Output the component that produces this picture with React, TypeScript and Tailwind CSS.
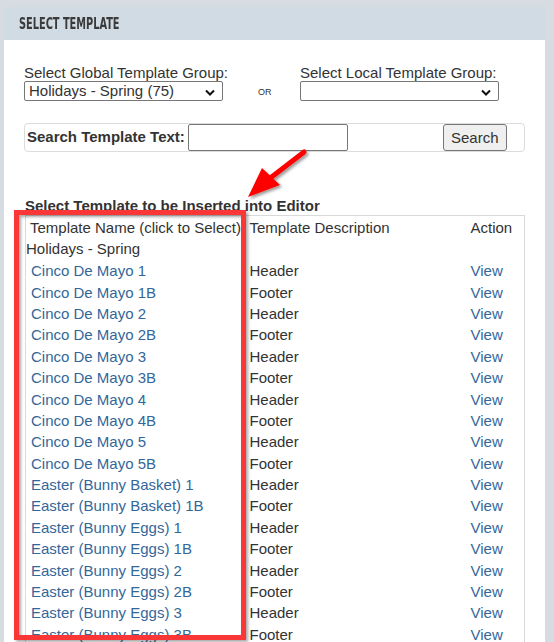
import React from 'react';

const rows: [string, string][] = [
  ['Cinco De Mayo 1', 'Header'],
  ['Cinco De Mayo 1B', 'Footer'],
  ['Cinco De Mayo 2', 'Header'],
  ['Cinco De Mayo 2B', 'Footer'],
  ['Cinco De Mayo 3', 'Header'],
  ['Cinco De Mayo 3B', 'Footer'],
  ['Cinco De Mayo 4', 'Header'],
  ['Cinco De Mayo 4B', 'Footer'],
  ['Cinco De Mayo 5', 'Header'],
  ['Cinco De Mayo 5B', 'Footer'],
  ['Easter (Bunny Basket) 1', 'Header'],
  ['Easter (Bunny Basket) 1B', 'Footer'],
  ['Easter (Bunny Eggs) 1', 'Header'],
  ['Easter (Bunny Eggs) 1B', 'Footer'],
  ['Easter (Bunny Eggs) 2', 'Header'],
  ['Easter (Bunny Eggs) 2B', 'Footer'],
  ['Easter (Bunny Eggs) 3', 'Header'],
  ['Easter (Bunny Eggs) 3B', 'Footer'],
];

function Chevron() {
  return (
    <svg width="10" height="7" viewBox="0 0 10 7" className="absolute right-[7px] top-[7px]">
      <path d="M1 1.5 L5 5.5 L9 1.5" fill="none" stroke="#111" strokeWidth="2" />
    </svg>
  );
}

export default function App() {
  return (
    <div className="h-[642px] overflow-hidden bg-[#d6dce1] pt-[7px] pl-[4px] pr-[9px] font-['Liberation_Sans',Arial,sans-serif] text-[15px] text-[#333]">
      <div className="bg-white min-h-[700px]">
        {/* Header band */}
        <div className="h-[33px] bg-[#d1dbe3] flex items-center pl-[15px]">
          <span className="inline-block origin-left scale-x-[0.68] whitespace-nowrap font-['DejaVu_Sans_Condensed','DejaVu_Sans',sans-serif] font-bold text-[16px] text-[#3a3a3a]">
            SELECT TEMPLATE
          </span>
        </div>

        {/* Group selects */}
        <div className="flex items-end pl-[20px] pt-[24px]">
          <div className="w-[199px]">
            <div className="leading-[17px] whitespace-nowrap">Select Global Template Group:</div>
            <div className="relative h-[20px] border border-[#767676] rounded-[2px] pl-[4px] leading-[18px]">
              Holidays - Spring (75)
              <Chevron />
            </div>
          </div>
          <div className="w-[77px] text-[9px] pl-[35px] pb-[2px]">OR</div>
          <div className="w-[199px]">
            <div className="leading-[17px] whitespace-nowrap">Select Local Template Group:</div>
            <div className="relative h-[20px] border border-[#767676] rounded-[2px]">
              <Chevron />
            </div>
          </div>
        </div>

        {/* Search row */}
        <div className="ml-[20px] mt-[22px] w-[501px] h-[29px] border border-[#dcdcdc] rounded-[4px] flex items-center pl-[2px]">
          <span className="font-bold whitespace-nowrap w-[161px]">Search Template Text:</span>
          <div className="w-[160px] h-[27px] border border-[#767676] rounded-[2px]" />
          <button className="ml-[95px] h-[27px] px-[7px] bg-[#efefef] border border-[#767676] rounded-[3px] text-[15px] leading-[20px]">
            Search
          </button>
        </div>

        {/* Template list */}
        <div className="relative pl-[21px] pt-[45px]">
          <div className="font-bold whitespace-nowrap leading-[17px]">Select Template to be Inserted into Editor</div>
          <table className="border border-[#d9d9d9] border-collapse w-[500px] mt-[1px]">
            <tbody>
              <tr className="h-[22px] leading-[21px]">
                <td className="w-[224px] pl-[4px] pt-[1px] align-top whitespace-nowrap">Template Name (click to Select)</td>
                <td className="align-top pt-[1px] whitespace-nowrap">Template Description</td>
                <td className="w-[54px] align-top pt-[1px]">Action</td>
              </tr>
              <tr className="h-[22px] leading-[22px]">
                <td colSpan={3}>Holidays - Spring</td>
              </tr>
              {rows.map(([name, desc]) => (
                <tr key={name} className="h-[21.4px] leading-[21px]">
                  <td className="pl-[5px] text-[#33679a] whitespace-nowrap">{name}</td>
                  <td>{desc}</td>
                  <td className="text-[#33679a]">View</td>
                </tr>
              ))}
            </tbody>
          </table>

          {/* Annotation: red box */}
          <div className="absolute left-[10px] top-[58px] w-[232px] h-[430px] border-[5px] border-[#fb3637] shadow-[2px_2px_3px_rgba(0,0,0,0.35),inset_2px_2px_3px_rgba(0,0,0,0.35)]" />

          {/* Annotation: arrow */}
          <svg className="absolute left-[230px] top-[-10px] overflow-visible" width="90" height="70" viewBox="0 0 90 70">
            <defs>
              <filter id="sh" x="-30%" y="-30%" width="160%" height="160%">
                <feDropShadow dx="2" dy="2" stdDeviation="1.5" floodColor="#000" floodOpacity="0.4" />
              </filter>
            </defs>
            <g filter="url(#sh)">
              <line x1="70" y1="10" x2="35" y2="37" stroke="#ff0000" strokeWidth="5" strokeLinecap="round" />
              <polygon points="14,55 28,26 46,43" fill="#ff0000" />
            </g>
          </svg>
        </div>
      </div>
    </div>
  );
}
